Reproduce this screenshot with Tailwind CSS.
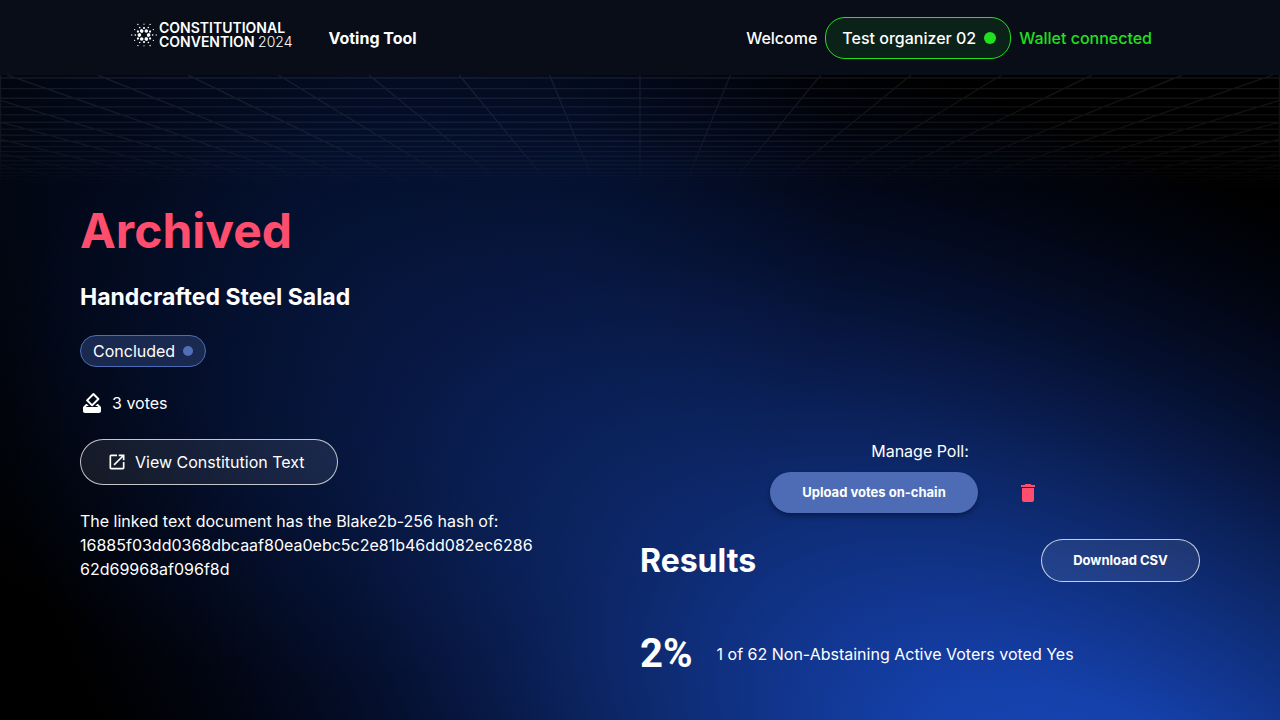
<!DOCTYPE html>
<html lang="en">
<head>
<meta charset="utf-8">
<meta name="viewport" content="width=device-width, initial-scale=1">
<title>Voting Tool</title>
<script src="https://cdn.jsdelivr.net/npm/@tailwindcss/browser@4"></script>
</head>
<body class="relative isolate min-h-screen overflow-x-hidden bg-black font-['Inter',sans-serif] text-base text-white">

<!-- Page glow -->
<svg class="absolute inset-0 -z-20 h-full w-full" viewBox="0 0 1280 720" preserveAspectRatio="none" aria-hidden="true">
  <defs>
    <radialGradient id="glow" gradientUnits="userSpaceOnUse" cx="0" cy="0" r="1" gradientTransform="translate(1125 840) rotate(-150) scale(1240 630)">
      <stop offset="0" stop-color="#1747bc"/>
      <stop offset="0.18" stop-color="#1541ac"/>
      <stop offset="0.32" stop-color="#11348a"/>
      <stop offset="0.45" stop-color="#0d286a"/>
      <stop offset="0.56" stop-color="#091c4e"/>
      <stop offset="0.7" stop-color="#050f2d"/>
      <stop offset="0.85" stop-color="#020613"/>
      <stop offset="1" stop-color="#000000"/>
    </radialGradient>
    <radialGradient id="haze" gradientUnits="userSpaceOnUse" cx="0" cy="0" r="1" gradientTransform="translate(320 200) scale(520 480)">
      <stop offset="0" stop-color="#030b20"/>
      <stop offset="0.5" stop-color="#020817"/>
      <stop offset="1" stop-color="#000000"/>
    </radialGradient>
  </defs>
  <rect width="1280" height="720" fill="url(#glow)"/>
  <rect class="mix-blend-screen" width="1280" height="720" fill="url(#haze)"/>
</svg>

<!-- Perspective grid under the header -->
<svg id="grid" class="absolute inset-x-0 top-0 -z-10 h-[190px] w-full" viewBox="0 0 1280 190" preserveAspectRatio="none" aria-hidden="true">
  <defs>
    <linearGradient id="fade" x1="0" y1="75" x2="0" y2="190" gradientUnits="userSpaceOnUse">
      <stop offset="0" stop-color="#fff"/>
      <stop offset="0.6" stop-color="#bbb"/>
      <stop offset="1" stop-color="#000"/>
    </linearGradient>
    <mask id="fadeMask" maskUnits="userSpaceOnUse" x="0" y="0" width="1280" height="190"><rect width="1280" height="190" fill="url(#fade)"/></mask>
  </defs>
  <g mask="url(#fadeMask)"><path id="gridLines" fill="none" stroke="#fff" stroke-opacity="0.08" stroke-width="1.4"/></g>
</svg>
<script>
  (function () {
    var d = 'M0.5 75V190M1279.5 75V190';
    for (var k = -24; k <= 24; k++) d += 'M' + (640 + k * 90.4) + ' 75L640 295';
    for (var n = 0; n < 21; n++) d += 'M0 ' + (295 - 1000 / (4.608 + 0.2365 * n)).toFixed(1) + 'H1280';
    document.getElementById('gridLines').setAttribute('d', d);
  })();
</script>

<header class="flex h-[75px] items-center justify-between bg-[#080d17] px-32">
  <div class="flex items-center gap-9">
    <a href="#" class="flex items-center pb-1.5 pl-[3px]" aria-label="Constitutional Convention 2024">
      <svg id="star" class="h-[26px] w-[26px] fill-white" viewBox="-13 -13 26 26" aria-hidden="true">
        <g id="arm">
          <circle cx="2.3" cy="-4" r="1.8"/>
          <circle cx="0" cy="-7" r="1.1"/>
          <circle cx="4.3" cy="-7.500" r="0.8"/>
          <circle cx="0" cy="-10.8" r="0.6"/>
          <circle cx="6.1" cy="-10.600" r="0.7"/>
        </g>
        <use href="#arm" transform="rotate(60)"/><use href="#arm" transform="rotate(120)"/><use href="#arm" transform="rotate(180)"/><use href="#arm" transform="rotate(240)"/><use href="#arm" transform="rotate(300)"/>
      </svg>
      <span class="flex flex-col pl-0.5 text-sm leading-[14px] font-semibold">
        <span>CONSTITUTIONAL</span>
        <span>CONVENTION <span class="font-light">2024</span></span>
      </span>
    </a>
    <a href="#" class="font-bold">Voting Tool</a>
  </div>
  <div class="flex items-center gap-2 font-medium">
    <span>Welcome</span>
    <span class="flex h-[42px] items-center gap-2 rounded-[20px] border border-[#21e01e] bg-[#0a2218] px-4 pr-3.5">Test organizer 02 <span class="size-3 rounded-full bg-[#21e01e]"></span></span>
    <span class="text-[#21e01e]">Wallet connected</span>
  </div>
</header>

<main class="grid grid-cols-2 px-20 pt-[120px] pb-6">
  <section class="flex flex-col items-start">
    <h1 class="text-[48px] leading-[72px] font-bold text-[#ff4d6d]">Archived</h1>
    <h2 class="mt-3 text-[23px] leading-9 font-bold">Handcrafted Steel Salad</h2>
    <span class="mt-5 flex h-8 items-center gap-2 rounded-2xl border border-[#4d6cb5] bg-[#1a294f] px-3">Concluded <span class="size-2.5 rounded-full bg-[#506fb8]"></span></span>
    <div class="mt-6 flex h-6 items-center gap-2">
      <svg class="size-6 fill-white" viewBox="0 0 24 24" aria-hidden="true"><path d="M18 13h-.68l-2 2h1.91L19 17H5l1.780-2h2.050l-2-2H6l-3 3v4c0 1.100.89 2 1.990 2H19c1.100 0 2-.89 2-2v-4l-3-3zM4 16.500h16V20H4z"/><path d="M17 7.950l-4.950 4.950-3.540-3.540 4.950-4.950L17 7.950zm-4.240-5.660L6.390 8.660a1 1 0 0 0 0 1.410l4.950 4.950c.39.39 1.020.39 1.410 0l6.360-6.360a1 1 0 0 0 0-1.410L14.160 2.300a.98.98 0 0 0-1.400-.01z"/><path d="M4 16h16v5H4z"/></svg>
      <span>3 votes</span>
    </div>
    <button type="button" class="mt-6 flex h-[46px] items-center gap-2 rounded-[24px] border border-white/75 bg-white/8 pr-8 pl-[26px]">
      <svg class="size-5 fill-white" viewBox="0 0 24 24" aria-hidden="true"><path d="M19 19H5V5h7V3H5c-1.110 0-2 .9-2 2v14c0 1.100.89 2 2 2h14c1.100 0 2-.9 2-2v-7h-2v7zM14 3v2h3.590l-9.830 9.830 1.410 1.410L19 6.410V10h2V3h-7z"/></svg>
      View Constitution Text
    </button>
    <p class="mt-6 max-w-[460px] leading-6 break-all"><span class="block">The linked text document has the Blake2b-256 hash of:</span>16885f03dd0368dbcaaf80ea0ebc5c2e81b46dd082ec628662d69968af096f8d</p>
  </section>

  <section class="pt-[244px]">
    <div class="mx-auto flex w-[300px] flex-col items-center">
      <p class="leading-6">Manage Poll:</p>
      <div class="mt-[9px] flex w-full gap-2">
        <button type="button" class="h-[41px] w-52 rounded-[24px] bg-[#4d6cb5] text-[13px] font-bold shadow-md shadow-black/30">Upload votes on-chain</button>
        <button type="button" aria-label="Delete poll" class="flex flex-1 items-center justify-center">
          <svg class="size-6 fill-[#ff4d6d]" viewBox="0 0 24 24" aria-hidden="true"><path d="M6 19c0 1.100.9 2 2 2h8c1.100 0 2-.9 2-2V7H6v12zM19 4h-3.500l-1-1h-5l-1 1H5v2h14V4z"/></svg>
        </button>
      </div>
    </div>
    <div class="mt-[26px] flex items-center justify-between">
      <h2 class="text-[32px] leading-10 font-bold">Results</h2>
      <button type="button" class="h-[43px] w-[159px] rounded-[24px] border border-white/75 bg-white/8 text-[13px] font-bold">Download CSV</button>
    </div>
    <div class="mt-[42px] flex items-center gap-6">
      <span class="font-['Roboto',sans-serif] text-[40px] leading-[60px] font-bold">2%</span>
      <span>1 of 62 Non-Abstaining Active Voters voted Yes</span>
    </div>
  </section>
</main>
</body>
</html>
